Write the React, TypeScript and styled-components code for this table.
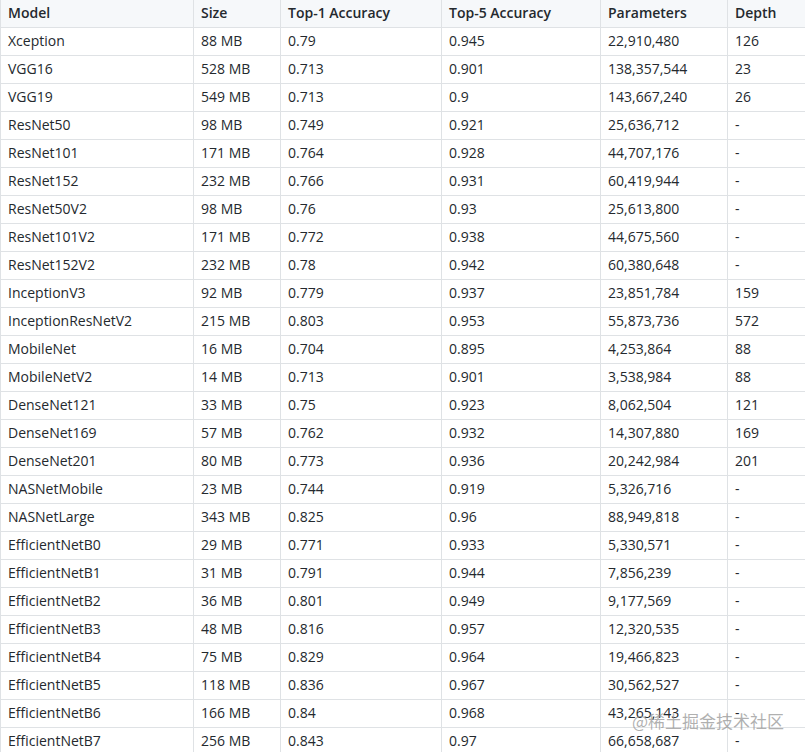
import React from "react";
import styled, { createGlobalStyle } from "styled-components";

const Global = createGlobalStyle`
  html, body { margin: 0; padding: 0; background: #fff; overflow: hidden; }
  body { font-family: "Open Sans", "Noto Sans", sans-serif; }
`;

const Page = styled.div`
  position: relative;
  width: 805px;
  height: 752px;
  overflow: hidden;
`;

const Table = styled.table`
  border-collapse: collapse;
  table-layout: fixed;
  width: 880px;
  margin-top: -1px;
  font-size: 14px;
  color: #24292e;
`;

const HeadCell = styled.th`
  text-align: left;
  font-weight: 600;
  background: #f6f8fa;
  border: 1px solid #dfe2e5;
  padding: 0 7px 2px;
  height: 25px;
  line-height: 17px;
  white-space: nowrap;
`;

const Cell = styled.td`
  border: 1px solid #dfe2e5;
  padding: 0 7px 2px;
  height: 25px;
  line-height: 17px;
  white-space: nowrap;
`;

const Watermark = styled.div`
  position: absolute;
  left: 632px;
  top: 708px;
  font-size: 17px;
  color: rgba(150, 150, 150, 0.75);
  font-family: "Noto Sans CJK SC", sans-serif;
  pointer-events: none;
`;

const rows: [string, string, string, string, string, string][] = [
  ["Xception", "88 MB", "0.79", "0.945", "22,910,480", "126"],
  ["VGG16", "528 MB", "0.713", "0.901", "138,357,544", "23"],
  ["VGG19", "549 MB", "0.713", "0.9", "143,667,240", "26"],
  ["ResNet50", "98 MB", "0.749", "0.921", "25,636,712", "-"],
  ["ResNet101", "171 MB", "0.764", "0.928", "44,707,176", "-"],
  ["ResNet152", "232 MB", "0.766", "0.931", "60,419,944", "-"],
  ["ResNet50V2", "98 MB", "0.76", "0.93", "25,613,800", "-"],
  ["ResNet101V2", "171 MB", "0.772", "0.938", "44,675,560", "-"],
  ["ResNet152V2", "232 MB", "0.78", "0.942", "60,380,648", "-"],
  ["InceptionV3", "92 MB", "0.779", "0.937", "23,851,784", "159"],
  ["InceptionResNetV2", "215 MB", "0.803", "0.953", "55,873,736", "572"],
  ["MobileNet", "16 MB", "0.704", "0.895", "4,253,864", "88"],
  ["MobileNetV2", "14 MB", "0.713", "0.901", "3,538,984", "88"],
  ["DenseNet121", "33 MB", "0.75", "0.923", "8,062,504", "121"],
  ["DenseNet169", "57 MB", "0.762", "0.932", "14,307,880", "169"],
  ["DenseNet201", "80 MB", "0.773", "0.936", "20,242,984", "201"],
  ["NASNetMobile", "23 MB", "0.744", "0.919", "5,326,716", "-"],
  ["NASNetLarge", "343 MB", "0.825", "0.96", "88,949,818", "-"],
  ["EfficientNetB0", "29 MB", "0.771", "0.933", "5,330,571", "-"],
  ["EfficientNetB1", "31 MB", "0.791", "0.944", "7,856,239", "-"],
  ["EfficientNetB2", "36 MB", "0.801", "0.949", "9,177,569", "-"],
  ["EfficientNetB3", "48 MB", "0.816", "0.957", "12,320,535", "-"],
  ["EfficientNetB4", "75 MB", "0.829", "0.964", "19,466,823", "-"],
  ["EfficientNetB5", "118 MB", "0.836", "0.967", "30,562,527", "-"],
  ["EfficientNetB6", "166 MB", "0.84", "0.968", "43,265,143", "-"],
  ["EfficientNetB7", "256 MB", "0.843", "0.97", "66,658,687", "-"],
];

const headers = ["Model", "Size", "Top-1 Accuracy", "Top-5 Accuracy", "Parameters", "Depth"];
const widths = [193, 87, 161, 159, 127, 153];

export default function App() {
  return (
    <Page>
      <Global />
      <Table>
        <colgroup>
          {widths.map((w, i) => (
            <col key={i} style={{ width: w }} />
          ))}
        </colgroup>
        <thead>
          <tr>
            {headers.map((h) => (
              <HeadCell key={h}>{h}</HeadCell>
            ))}
          </tr>
        </thead>
        <tbody>
          {rows.map((r) => (
            <tr key={r[0]}>
              {r.map((c, i) => (
                <Cell key={i}>{c}</Cell>
              ))}
            </tr>
          ))}
        </tbody>
      </Table>
      <Watermark>@稀土掘金技术社区</Watermark>
    </Page>
  );
}
